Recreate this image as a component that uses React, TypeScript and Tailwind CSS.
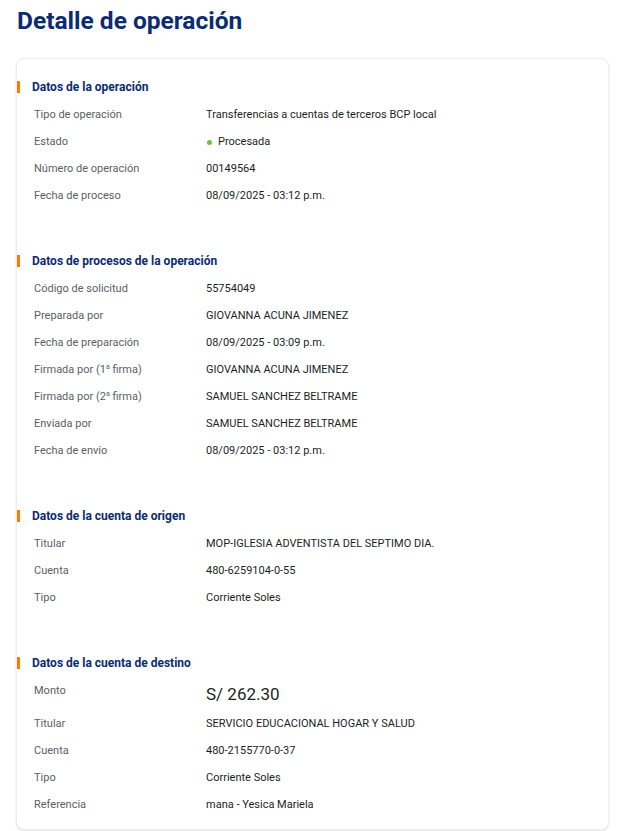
import React from 'react';

type Row = { label: React.ReactNode; value: React.ReactNode };

const sections: { title: string; rows: Row[] }[] = [
  {
    title: 'Datos de la operación',
    rows: [
      { label: 'Tipo de operación', value: 'Transferencias a cuentas de terceros BCP local' },
      {
        label: 'Estado',
        value: (
          <span className="flex items-center gap-[6px]">
            <span className="w-[5px] h-[5px] rounded-full bg-[#6cbf3f] ml-[1px]"></span>
            Procesada
          </span>
        ),
      },
      { label: 'Número de operación', value: '00149564' },
      { label: 'Fecha de proceso', value: '08/09/2025 - 03:12 p.m.' },
    ],
  },
  {
    title: 'Datos de procesos de la operación',
    rows: [
      { label: 'Código de solicitud', value: '55754049' },
      { label: 'Preparada por', value: 'GIOVANNA ACUNA JIMENEZ' },
      { label: 'Fecha de preparación', value: '08/09/2025 - 03:09 p.m.' },
      { label: <>Firmada por (1<sup className="text-[7px]">a</sup> firma)</>, value: 'GIOVANNA ACUNA JIMENEZ' },
      { label: <>Firmada por (2<sup className="text-[7px]">a</sup> firma)</>, value: 'SAMUEL SANCHEZ BELTRAME' },
      { label: 'Enviada por', value: 'SAMUEL SANCHEZ BELTRAME' },
      { label: 'Fecha de envío', value: '08/09/2025 - 03:12 p.m.' },
    ],
  },
  {
    title: 'Datos de la cuenta de origen',
    rows: [
      { label: 'Titular', value: 'MOP-IGLESIA ADVENTISTA DEL SEPTIMO DIA.' },
      { label: 'Cuenta', value: '480-6259104-0-55' },
      { label: 'Tipo', value: 'Corriente Soles' },
    ],
  },
];

const destino: Row[] = [
  { label: 'Titular', value: 'SERVICIO EDUCACIONAL HOGAR Y SALUD' },
  { label: 'Cuenta', value: '480-2155770-0-37' },
  { label: 'Tipo', value: 'Corriente Soles' },
  { label: 'Referencia', value: 'mana - Yesica Mariela' },
];

const SectionHeader = ({ title }: { title: string }) => (
  <div className="flex items-center h-[20px] mb-[4.5px]">
    <div className="w-[3px] h-[12px] bg-[#ff7a00]"></div>
    <h3 className="ml-[12px] text-[12px] font-bold text-[#0c2c72]">{title}</h3>
  </div>
);

const DataRow = ({ row }: { row: Row }) => (
  <div className="flex items-center h-[27px] pl-[17px] text-[11px]">
    <div className="w-[172px] text-[#5a5f66]">{row.label}</div>
    <div className="text-[#1b1f24]">{row.value}</div>
  </div>
);

export default function App() {
  return (
    <div className="min-h-screen bg-white pt-[5px] pl-[16px] pr-[17px]" style={{ fontFamily: 'Roboto, "Liberation Sans", sans-serif' }}>
      <h1 className="pl-[1px] text-[24.5px] leading-[32px] font-bold text-[#0c2c72]">Detalle de operación</h1>

      <div className="mt-[21px] bg-white border border-[#eeeeee] rounded-[8px] shadow-[0_1px_2px_rgba(0,0,0,0.12)] pt-[18px] pb-[10px]">
        {sections.map((section, i) => (
          <div key={i} className="mb-[41.5px]">
            <SectionHeader title={section.title} />
            {section.rows.map((row, j) => (
              <DataRow key={j} row={row} />
            ))}
          </div>
        ))}

        <div>
          <SectionHeader title="Datos de la cuenta de destino" />
          <div className="flex items-start h-[33px] pl-[17px] text-[11px]">
            <div className="w-[172px] h-[27px] flex items-center text-[#5a5f66]">Monto</div>
            <div className="leading-[33px] text-[17px] text-[#1b1f24]">S/ 262.30</div>
          </div>
          {destino.map((row, j) => (
            <DataRow key={j} row={row} />
          ))}
        </div>
      </div>
    </div>
  );
}
